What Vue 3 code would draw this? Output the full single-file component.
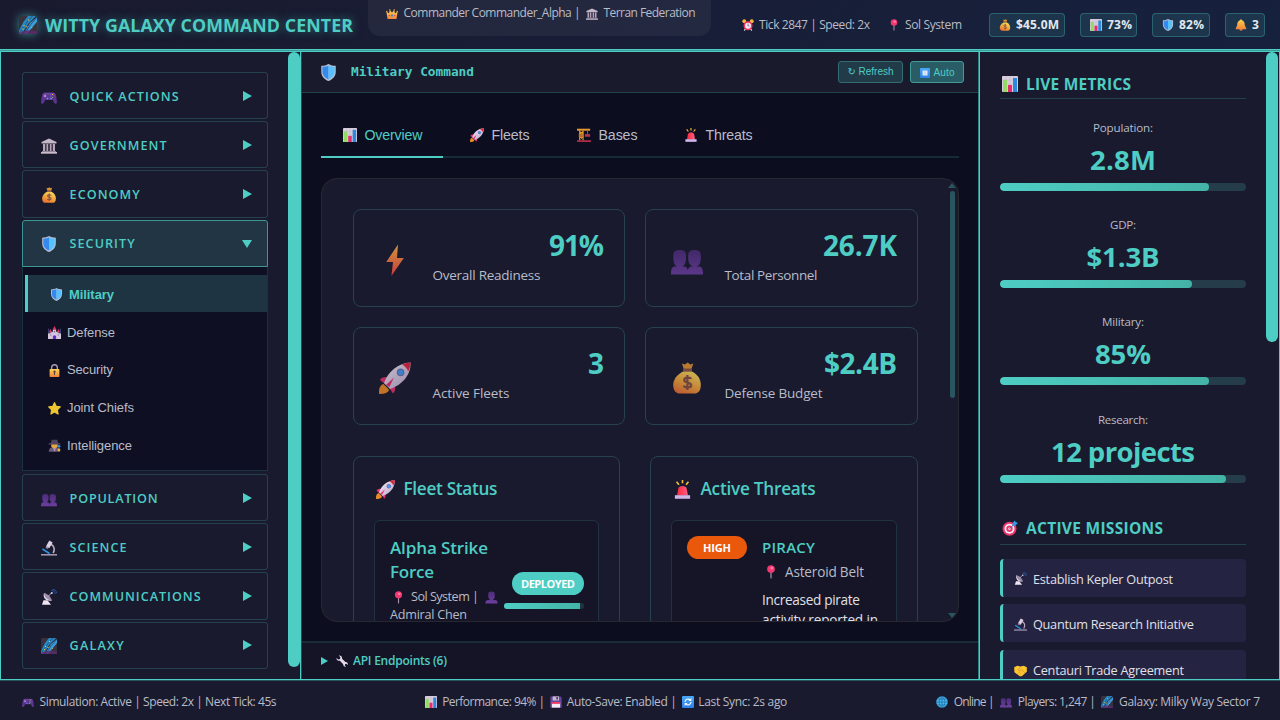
<script setup>
import { h } from 'vue'

const Icon = (props) =>
  h('svg', { class: 'icon', width: props.s, height: props.s, viewBox: '0 0 16 16' }, [
    h('use', { href: '#i-' + props.n })
  ])
Icon.props = ['n', 's']

// Spreads the letters so that a label occupies the given width.
const vFit = {
  mounted(el, binding) {
    const natural = el.getBoundingClientRect().width
    const gaps = el.textContent.length - 1
    if (gaps < 1) return
    const ls = (binding.value - natural) / gaps
    el.style.letterSpacing = ls + 'px'
    el.style.marginRight = -ls + 'px'
  }
}

const chips = [
  { icon: 'money', text: '$45.0M', w: 43, box: 76 },
  { icon: 'chart', text: '73%', w: 25, box: 57 },
  { icon: 'shield', text: '82%', w: 25, box: 58 },
  { icon: 'bell', text: '3', w: 7, box: 40 }
]
const menuTop = [
  { icon: 'gamepad', text: 'QUICK ACTIONS', w: 109 },
  { icon: 'bank', text: 'GOVERNMENT', w: 97 },
  { icon: 'money', text: 'ECONOMY', w: 70 },
  { icon: 'shield', text: 'SECURITY', w: 65, open: true }
]
const menuBottom = [
  { icon: 'people', text: 'POPULATION', w: 88 },
  { icon: 'microscope', text: 'SCIENCE', w: 57 },
  { icon: 'dish', text: 'COMMUNICATIONS', w: 131 },
  { icon: 'galaxy', text: 'GALAXY', w: 54 }
]
const subItems = [
  { icon: 'shield', text: 'Military', w: 45, active: true },
  { icon: 'castle', text: 'Defense', w: 48 },
  { icon: 'lock', text: 'Security', w: 46 },
  { icon: 'star', text: 'Joint Chiefs', w: 67 },
  { icon: 'detective', text: 'Intelligence', w: 65 }
]
const tabs = [
  { icon: 'chart', text: 'Overview', w: 58, box: 122, active: true },
  { icon: 'rocket', text: 'Fleets', w: 38, box: 107 },
  { icon: 'crane', text: 'Bases', w: 39, box: 107 },
  { icon: 'siren', text: 'Threats', w: 47, box: 112 }
]
const stats = [
  { icon: 'bolt', value: '91%', vw: 55, label: 'Overall Readiness', lw: 108 },
  { icon: 'people', value: '26.7K', vw: 74, label: 'Total Personnel', lw: 93 },
  { icon: 'rocket', value: '3', vw: 14, label: 'Active Fleets', lw: 77 },
  { icon: 'money', value: '$2.4B', vw: 73, label: 'Defense Budget', lw: 98 }
]
const metrics = [
  { label: 'Population:', lw: 60, value: '2.8M', vw: 66, pct: 85 },
  { label: 'GDP:', lw: 26, value: '$1.3B', vw: 73, pct: 78 },
  { label: 'Military:', lw: 42, value: '85%', vw: 56, pct: 85 },
  { label: 'Research:', lw: 50, value: '12 projects', vw: 144, pct: 92 }
]
const missions = [
  { icon: 'dish', text: 'Establish Kepler Outpost', w: 140 },
  { icon: 'microscope', text: 'Quantum Research Initiative', w: 161 },
  { icon: 'handshake', text: 'Centauri Trade Agreement', w: 151 }
]
</script>

<template>
  <svg class="sprite" width="0" height="0">
    <defs>
      <linearGradient id="g-gold" x1="0" y1="0" x2="0" y2="1"><stop offset="0" stop-color="#ffd44f" /><stop offset="1" stop-color="#f0843c" /></linearGradient>
      <linearGradient id="g-bag" x1=".8" y1="0" x2=".3" y2="1"><stop offset="0" stop-color="#f8e060" /><stop offset=".6" stop-color="#f0a038" /><stop offset="1" stop-color="#e87034" /></linearGradient>
      <linearGradient id="g-bolt" x1="0" y1="0" x2="0" y2="1"><stop offset="0" stop-color="#ffb545" /><stop offset="1" stop-color="#f2443f" /></linearGradient>
      <linearGradient id="g-purple" x1="0" y1="0" x2="0" y2="1"><stop offset="0" stop-color="#4b2d78" /><stop offset="1" stop-color="#6c3fa0" /></linearGradient>
      <linearGradient id="g-red" x1="0" y1="0" x2="1" y2="0"><stop offset="0" stop-color="#ff2a3c" /><stop offset="1" stop-color="#ff5f84" /></linearGradient>
      <linearGradient id="g-hull" x1="0" y1="0" x2="1" y2="1"><stop offset="0" stop-color="#f4ecf8" /><stop offset="1" stop-color="#b9a5c9" /></linearGradient>
      <linearGradient id="g-blue" x1="0" y1="0" x2="0" y2="1"><stop offset="0" stop-color="#49a9f8" /><stop offset="1" stop-color="#2f7fe8" /></linearGradient>
    </defs>
    <symbol id="i-galaxy" viewBox="0 0 16 16">
      <rect width="16" height="16" rx="1.500" fill="#37323d" />
      <path d="M0 13 4 5 8 0h7L8 7 2.500 16H0z" fill="#2789c4" /><path d="M16 1v4L7 16H4L10 6z" fill="#3a9edb" />
      <path d="M1 14 9 3 12 0M5 16 10 8l6-7" fill="none" stroke="#234c78" stroke-width=".8" />
      <path d="M0 14.500q8-3 16-.8V16H0z" fill="#5b2a6b" opacity=".8" />
      <path d="M4 8h1v1H4zM6.500 9h1v1h-1zM3 11h1v1H3zM8 3h1v1H8zM11 10h.8v.8H11z" fill="#e5d255" />
    </symbol>
    <symbol id="i-crown" viewBox="0 0 16 16">
      <path d="M.5 4.500 4 7l1.200-4L8 6l2.800-3L12 7l3.500-2.500L14 14.500H2z" fill="url(#g-gold)" />
      <g fill="#f5a544"><circle cx="1" cy="4.500" r="1" /><circle cx="5" cy="2.600" r="1.100" /><circle cx="11" cy="2.600" r="1.100" /><circle cx="15" cy="4.500" r="1" /></g>
      <circle cx="8" cy="10" r="1.500" fill="#2f83e8" /><circle cx="4.300" cy="10" r=".9" fill="#e8365f" /><circle cx="11.700" cy="10" r=".9" fill="#e8365f" />
    </symbol>
    <symbol id="i-bank" viewBox="0 0 16 16">
      <path d="M8 .5 15.500 4v1.500H.5V4z" fill="#c3b6c6" /><path d="M2 6h2v7H2zM5.300 6h2v7h-2zM8.700 6h2v7h-2zM12 6h2v7h-2z" fill="#b3a6b8" />
      <path d="M4 6h1.300v7H4zM7.300 6h1.400v7H7.300zM10.700 6H12v7h-1.300z" fill="#483c55" /><path d="M1 13h14v1H1z" fill="#94869a" /><path d="M0 14h16v1.700H0z" fill="#c9bccb" />
    </symbol>
    <symbol id="i-alarm" viewBox="0 0 16 16">
      <circle cx="3" cy="3" r="2.600" fill="#f5b63d" /><circle cx="13" cy="3" r="2.600" fill="#f5b63d" />
      <path d="M3 15.500l2-3M13 15.500l-2-3" stroke="#d9cadf" stroke-width="1.600" />
      <circle cx="8" cy="9" r="6" fill="#f6325f" /><circle cx="8" cy="9" r="4" fill="#f4eef6" /><path d="M8 6v3.300h2" fill="none" stroke="#6d4b80" stroke-width="1" />
    </symbol>
    <symbol id="i-pin" viewBox="0 0 16 16">
      <path d="M7.300 8h1.400v6.500l-.7 1.500-.7-1.500z" fill="#a393ad" /><circle cx="8" cy="4.700" r="4.400" fill="#f33872" /><circle cx="9" cy="3.500" r="1.500" fill="#ff87a5" />
    </symbol>
    <symbol id="i-money" viewBox="0 0 16 16">
      <path d="M5.500.8 7 1.300 8.300.3 9.700 1.300l1.500-.5L10 4H6.500z" fill="#e0922f" /><rect x="6" y="3.300" width="4.500" height="1.400" rx=".6" fill="#8f5447" />
      <path d="M6 4.700h4.500c3 1.600 4.400 4 4.400 6.700 0 3-1.300 4.400-3.300 4.400H4.500c-2 0-3.400-1.400-3.400-4.400C1.100 8.700 3 6.300 6 4.700z" fill="url(#g-bag)" />
      <path d="M10 8.500c-.3-.9-3.400-1.100-3.400.5 0 1.700 3.500.9 3.500 2.600 0 1.500-3.300 1.400-3.700.2M8.200 6.500V14" fill="none" stroke="#865044" stroke-width="1.100" />
    </symbol>
    <symbol id="i-chart" viewBox="0 0 16 16">
      <rect width="16" height="16" rx="1" fill="#d9cede" /><path d="M0 4h16M0 8h16M4 0v16M8 0v16M12 0v16" stroke="#b9adc2" stroke-width=".4" />
      <path d="M1 4h4v12H1z" fill="#93dc63" /><path d="M6 9h4v7H6z" fill="#e52c6c" /><path d="M11 2h4v14h-4z" fill="#2e88dd" />
    </symbol>
    <symbol id="i-shield" viewBox="0 0 16 16">
      <path d="M8 0C10 1.300 12.300 1.600 14.800 1.700v5.500c0 4.300-2.800 7.200-6.800 8.800-4-1.600-6.800-4.500-6.800-8.800V1.700C3.700 1.600 6 1.300 8 0z" fill="#b8bfd5" />
      <path d="M8 1.300v13.300c-3.400-1.500-5.700-3.800-5.700-7.200V2.700C4.300 2.600 6.400 2.300 8 1.300z" fill="#3588ed" /><path d="M8 1.300v13.300c3.400-1.500 5.700-3.800 5.700-7.200V2.700c-2-.1-4.100-.4-5.700-1.400z" fill="#55c2ff" />
    </symbol>
    <symbol id="i-bell" viewBox="0 0 16 16">
      <circle cx="8" cy="13.500" r="2" fill="#dc743d" /><path d="M8 .5c1 0 1.400.5 1.500 1.300C12 2.700 13 5 13 8l2 4.500v1H1v-1L3 8c0-3 1-5.300 3.500-6.200C6.600 1 7 .5 8 .5z" fill="url(#g-gold)" />
    </symbol>
    <symbol id="i-gamepad" viewBox="0 0 16 16">
      <path d="M4 3.500h8c2 0 2.600 1 3.200 4l.7 5c.3 3-2 3-3.200.5L12 11H4l-.7 2C2 15.500-.2 15.500.1 12.500l.7-5c.6-3 1.200-4 3.200-4z" fill="#5d348f" />
      <path d="M3 4.500h10l1 1H2z" fill="#7c50b4" /><circle cx="4" cy="7" r="1.300" fill="#a88bd0" /><circle cx="6.500" cy="9.500" r="1" fill="#6e86dc" /><circle cx="10" cy="9.500" r="1" fill="#6e86dc" />
      <path d="M11 5h1v1h-1z" fill="#ead044" /><path d="M12.500 6.500h1v1h-1z" fill="#ef3b5c" /><path d="M11 8h1v1h-1z" fill="#4dbb69" /><path d="M9.500 6.500h1v1h-1z" fill="#4ea3ed" />
    </symbol>
    <symbol id="i-person" viewBox="0 0 16 16"><path d="M4 3.500C4 1.500 5.500.5 8 .5s4 1 4 3v3c0 2-.8 3.200-2 3.900v.6h2c2.500 0 3.500 1 3.500 4.500H.5C.5 12 1.500 11 4 11h2v-.6C4.800 9.700 4 8.500 4 6.500z" fill="url(#g-purple)" /></symbol>
    <symbol id="i-people" viewBox="0 0 16 16">
      <path d="M1.200 5.500C1.200 3.800 2.200 3 4.300 3s3.200.8 3.200 2.500v2C7.500 9.500 6.500 11 5.500 11.300h1C8 11.300 8.600 12.500 8.600 15.200H0C0 12.500.5 11.300 2 11.300h1C2 10.800 1.200 9.500 1.200 7.500z" fill="url(#g-purple)" />
      <path d="M8.600 5.500C8.600 3.800 9.700 3 11.800 3s3.100.8 3.100 2.500v2c0 2-.9 3.300-2 3.800h1c1.600 0 2.100 1.200 2.100 3.900H8.200c0-2.700.7-3.900 2.200-3.900h.6c-1.300-.5-2.400-1.800-2.400-3.800z" fill="url(#g-purple)" />
    </symbol>
    <symbol id="i-microscope" viewBox="0 0 16 16">
      <path d="M8.500 4.500C13 4 14.500 10 12 13" fill="none" stroke="#b8abc4" stroke-width="1.500" /><path d="m8.300.5 3.400 2-3.500 5.800-3.300-1.900z" fill="#dcd0e2" />
      <path d="m5.500 6 2.300 1.400L6.500 9 4.500 7.800z" fill="#9c8fa8" /><path d="m1.500 9 7 4.500" stroke="#2d93e0" stroke-width="1.600" /><path d="M0 14h16v1.600H0z" fill="#9f93ab" />
    </symbol>
    <symbol id="i-dish" viewBox="0 0 16 16">
      <path d="m1 15.800 1.500-4.500h4L10 15.800z" fill="#eee5f0" /><path d="M3 4c-1.500 4 1.500 9 8 7.500z" fill="#ddd0e1" /><path d="M3 4c3.500.5 7 4 8 7.500-4-.3-8-3.500-8-7.500z" fill="#9889a7" />
      <path d="m6.500 8 4-4" stroke="#b7abc0" stroke-width="1" /><circle cx="10.800" cy="4" r="1" fill="#d9cfdf" /><path d="M10.500 1.500c2.500 0 3.600 1.400 3.600 3.500M11.500.3c3 .1 4 2 4 3.800" fill="none" stroke="#28559f" stroke-width="1" />
    </symbol>
    <symbol id="i-castle" viewBox="0 0 16 16">
      <path d="M0 9h3V7h3V4h4v3h3v2h3v7H0z" fill="#d6c6db" /><path d="m8 0 2.300 4.500H5.700zM3 3.500 5 8H1zM13 3.500 15 8h-4z" fill="#e13565" /><path d="M.3 3h1v6h-1zM14.700 3h1v6h-1z" fill="#36518c" />
      <path d="M6 16v-3.500q2-2.500 4 0V16z" fill="#5a2fd0" /><path d="M7.200 6h1.600v2H7.200zM3 10h1v2H3zM12 10h1v2h-1z" fill="#78699a" />
    </symbol>
    <symbol id="i-lock" viewBox="0 0 16 16"><path d="M4.500 7V4.500a3.500 3.500 0 0 1 7 0V7" fill="none" stroke="#a99bb0" stroke-width="1.700" /><rect x="2" y="6" width="12" height="10" rx="1" fill="url(#g-gold)" /><path d="M7.300 9.500h1.400v4H7.300z" fill="#59404a" /><circle cx="8" cy="9.500" r="1.400" fill="#59404a" /></symbol>
    <symbol id="i-star" viewBox="0 0 16 16"><path d="m8 .8 2.100 4.500 5 .7-3.600 3.600.9 5.200L8 12.400l-4.400 2.400.9-5.200L.9 6l5-.7z" fill="#edc52f" stroke="#edc52f" stroke-width="1.500" stroke-linejoin="round" /></symbol>
    <symbol id="i-detective" viewBox="0 0 16 16">
      <path d="M1 15.700Q1 10 6 10h4q5 0 5 5.700z" fill="#655c79" /><path d="M4 5h8v4l-2 2.500H6L4 9z" fill="#e9a640" /><path d="M4.500 1h7l.8 3.500 3 1v1.200H.7V5.500l3-1z" fill="#4f455f" /><path d="m6 10 2 1.500L10 10 8.700 15H7.500z" fill="#b78cb9" />
      <circle cx="13.500" cy="9" r="1.700" fill="#2697e6" /><circle cx="13.500" cy="13.500" r="1.700" fill="#f4b33d" />
    </symbol>
    <symbol id="i-rocket" viewBox="0 0 16 16">
      <path d="M2.200 11c-2 .5-2.400 3.500-2.100 5 1.700 0 4.500-.2 4.900-2.100z" fill="#ed8a27" /><path d="M.5 9c.3-1.300 2-1.700 5-1.500L3.500 11.500zM8 10.500c.2 2.500.2 4.300-1 5.300L4.500 12z" fill="#e92f6b" />
      <path d="M2.500 10.500C4.500 5 9 .5 15.800.2 16 7 11 11.500 5.500 13.500z" fill="url(#g-hull)" /><path d="M11.500 1.300C13 .6 14.500.2 15.800.2c0 1.300-.4 2.900-1.200 4.400C14 3.300 12.700 1.800 11.500 1.300z" fill="#e0243e" />
      <path d="m3.500 11.500 4-3.700-2.300 4.700z" fill="#e92f6b" /><circle cx="10.800" cy="5.200" r="1.900" fill="#6c70a9" /><circle cx="10.800" cy="5.200" r="1.300" fill="#459af0" />
    </symbol>
    <symbol id="i-crane" viewBox="0 0 16 16">
      <path d="M3 2.500v11.500M7 2.500v11.500M3 4l4 3-4 3 4 3M7 4 3 7l4 3-4 3" fill="none" stroke="#e79a2b" stroke-width="1.200" /><path d="M0 .8h15v2.300H0z" fill="#e69735" /><path d="M2 7h5.500v3H2z" fill="#b7742e" />
      <path d="M12 3v4" stroke="#766a86" stroke-width="1" /><path d="M9 7h6v3H9z" fill="#b7354d" /><path d="M0 14.200h16v1.500H0z" fill="#e63956" />
    </symbol>
    <symbol id="i-siren" viewBox="0 0 16 16">
      <path d="M8 0v2.800M3 1.500 5 4M13 1.500 11 4" stroke="#f5c03c" stroke-width="1.300" /><path d="m3.400 13 1-5.500C4.800 5.700 6 5 8 5s3.200.7 3.600 2.500l1 5.500z" fill="url(#g-red)" /><path d="M1.600 12.800h12.800v3H1.600z" fill="#cfb7e8" />
    </symbol>
    <symbol id="i-bolt" viewBox="0 0 16 16"><path d="M9.500.2 3.600 9H7L6.200 16l6.200-9H9z" fill="url(#g-bolt)" /></symbol>
    <symbol id="i-pause" viewBox="0 0 16 16"><rect width="16" height="16" rx="1.500" fill="url(#g-blue)" /><path d="M4 4h8v8H4z" fill="#e2eafa" /><path d="M7.500 4h1v8h-1z" fill="#9cc6f6" /></symbol>
    <symbol id="i-target" viewBox="0 0 16 16">
      <circle cx="7.500" cy="8.800" r="7" fill="#e9366c" /><circle cx="7.500" cy="8.800" r="5" fill="#f5eef6" /><circle cx="7.500" cy="8.800" r="3.200" fill="#e9366c" /><circle cx="7.500" cy="8.800" r="1.200" fill="#f5eef6" /><path d="m7.500 8.800 5-5" stroke="#695887" /><path d="M10.500 3.500 12.500.5l1.200 1.600L16 3l-3 2.700-2.500.5z" fill="#319be9" />
    </symbol>
    <symbol id="i-handshake" viewBox="0 0 16 16">
      <path d="M.2 4 4 2l4 1.200L12 2l3.800 2v5.500L9.500 15H7L.5 10z" fill="#fbc630" /><path d="m8 4-3 3.500 1.500 1L9 7l4.500 4M5 11.500l2-2M7 13l2-2" fill="none" stroke="#dc8e25" stroke-width=".9" />
    </symbol>
    <symbol id="i-wrench" viewBox="0 0 16 16"><path d="M3.700.6c2.800-.4 4.900 1.500 4.400 4.300l4.500 4.500c2-.3 3.700 1.500 3.100 3.800l-1.900-1.500-1.700.6-.2 1.800 1.500 1.400c-2.300.6-4.200-1.200-3.800-3.300L5.100 7.700C2.500 8.300.5 6.400.5 3.900L3 6l2.300-.7.5-2.400z" fill="#e3d7e8" /></symbol>
    <symbol id="i-floppy" viewBox="0 0 16 16"><path d="M.5 1q0-.5.5-.5h13L15.500 2v13.500H.5z" fill="#63459d" /><path d="M3.500.5h8.500v5.500H3.500z" fill="#c7bad0" /><path d="M8.500 1.300h2v3.500h-2z" fill="#3f2b62" /><path d="M2.500 8h11v7.500h-11z" fill="#f4eaf4" /><path d="M2.500 8h11v2.500h-11z" fill="#ee3c64" /></symbol>
    <symbol id="i-sync" viewBox="0 0 16 16"><rect width="16" height="16" rx="1.500" fill="url(#g-blue)" /><path d="M4 8a4 4 0 0 1 7-2.500M12 8a4 4 0 0 1-7 2.500" fill="none" stroke="#f7f7ff" stroke-width="1.600" /><path d="M12.500 2.800v4h-4zM3.500 13.200v-4h4z" fill="#f7f7ff" /></symbol>
    <symbol id="i-globe" viewBox="0 0 16 16"><circle cx="8" cy="8" r="7.700" fill="#45b7ef" /><path d="M8 .3v15.400M.3 8h15.400M1.500 4h13M1.500 12h13M8 .3C3 4 3 12 8 15.700M8 .3c5 3.700 5 11.700 0 15.400" fill="none" stroke="#1c5e94" stroke-width=".8" /></symbol>
  </svg>

  <div class="app">
    <header class="top">
      <div class="brand"><Icon n="galaxy" s="18" /><span v-fit="308">WITTY GALAXY COMMAND CENTER</span></div>
      <div class="commander">
        <Icon n="crown" s="12" /><span v-fit="177">Commander Commander_Alpha |</span>
        <Icon n="bank" s="12" /><span v-fit="92">Terran Federation</span>
      </div>
      <div class="where">
        <Icon n="alarm" s="12" /><span v-fit="111">Tick 2847 | Speed: 2x</span>
        <Icon class="gap" n="pin" s="12" /><span v-fit="57">Sol System</span>
      </div>
      <div class="chips">
        <div v-for="c in chips" :key="c.text" class="chip" :style="{ width: c.box + 'px' }"><Icon :n="c.icon" s="12" /><span v-fit="c.w">{{ c.text }}</span></div>
      </div>
    </header>

    <main class="main">
      <nav class="side">
        <div class="menu">
          <div v-for="m in menuTop" :key="m.text" class="cat" :class="{ open: m.open }">
            <Icon :n="m.icon" s="16" /><span v-fit="m.w">{{ m.text }}</span><i class="arrow"></i>
          </div>
          <div class="sub">
            <div v-for="s in subItems" :key="s.text" class="subitem" :class="{ active: s.active }"><Icon :n="s.icon" s="13" /><span v-fit="s.w">{{ s.text }}</span></div>
          </div>
          <div v-for="m in menuBottom" :key="m.text" class="cat">
            <Icon :n="m.icon" s="16" /><span v-fit="m.w">{{ m.text }}</span><i class="arrow"></i>
          </div>
        </div>
        <div class="thumb left"></div>
      </nav>

      <section class="center">
        <div class="bar">
          <Icon n="shield" s="17" /><b v-fit="123">Military Command</b>
          <div class="btn refresh"><span v-fit="46">↻ Refresh</span></div>
          <div class="btn auto"><Icon n="pause" s="10" /><span v-fit="21">Auto</span></div>
        </div>
        <div class="tabs">
          <div v-for="t in tabs" :key="t.text" class="tab" :class="{ active: t.active }" :style="{ width: t.box + 'px' }"><Icon :n="t.icon" s="14" /><span v-fit="t.w">{{ t.text }}</span></div>
        </div>
        <div class="panel">
          <div class="scroll">
            <div class="stats">
              <div v-for="s in stats" :key="s.label" class="stat">
                <Icon :n="s.icon" s="32" />
                <div class="statbody"><div class="value"><span v-fit="s.vw">{{ s.value }}</span></div><div class="label"><span v-fit="s.lw">{{ s.label }}</span></div></div>
              </div>
            </div>
            <div class="groups">
              <div class="group">
                <h3><Icon n="rocket" s="19" /><span v-fit="94">Fleet Status</span></h3>
                <div class="entry">
                  <div class="fleet">
                    <div class="fname"><span v-fit="98">Alpha Strike</span><br /><span v-fit="44">Force</span></div>
                    <div class="floc"><Icon n="pin" s="13" /><span v-fit="68">Sol System |</span><Icon n="person" s="13" /></div>
                    <div class="floc2"><span v-fit="77">Admiral Chen</span></div>
                  </div>
                  <div class="fstate"><div class="badge deployed"><span v-fit="54">DEPLOYED</span></div><div class="mini"><div></div></div></div>
                </div>
              </div>
              <div class="group">
                <h3><Icon n="siren" s="19" /><span v-fit="115">Active Threats</span></h3>
                <div class="entry threat">
                  <div class="badge high"><span v-fit="28">HIGH</span></div>
                  <div class="tinfo">
                    <div class="tname"><span v-fit="53">PIRACY</span></div>
                    <div class="tloc"><Icon n="pin" s="14" /><span v-fit="79">Asteroid Belt</span></div>
                    <div class="tdesc"><span v-fit="98">Increased pirate</span><br /><span v-fit="116">activity reported in</span></div>
                  </div>
                </div>
              </div>
            </div>
          </div>
          <div class="inner-thumb"></div><i class="tri up"></i><i class="tri down"></i>
        </div>
        <div class="api"><i class="arrow"></i><Icon n="wrench" s="12" /><span v-fit="94">API Endpoints (6)</span></div>
      </section>

      <aside class="right">
        <h2><Icon n="chart" s="16" /><span v-fit="105">LIVE METRICS</span></h2>
        <div v-for="m in metrics" :key="m.label" class="metric">
          <div class="mlabel"><span v-fit="m.lw">{{ m.label }}</span></div>
          <div class="mvalue"><span v-fit="m.vw">{{ m.value }}</span></div>
          <div class="track"><div :style="{ width: m.pct + '%' }"></div></div>
        </div>
        <h2 class="second"><Icon n="target" s="16" /><span v-fit="137">ACTIVE MISSIONS</span></h2>
        <div v-for="m in missions" :key="m.text" class="mission"><Icon :n="m.icon" s="13" /><span v-fit="m.w">{{ m.text }}</span></div>
        <div class="thumb rightbar"></div>
      </aside>
    </main>

    <footer class="foot">
      <div><Icon n="gamepad" s="12" /><span v-fit="237">Simulation: Active | Speed: 2x | Next Tick: 45s</span></div>
      <div class="mid"><Icon n="chart" s="12" /><span v-fit="103">Performance: 94% |</span><Icon n="floppy" s="12" /><span v-fit="110">Auto-Save: Enabled |</span><Icon n="sync" s="12" /><span v-fit="89">Last Sync: 2s ago</span></div>
      <div><Icon n="globe" s="12" /><span v-fit="41">Online |</span><Icon n="people" s="12" /><span v-fit="78">Players: 1,247 |</span><Icon n="galaxy" s="12" /><span v-fit="141">Galaxy: Milky Way Sector 7</span></div>
    </footer>
  </div>
</template>

<style>
body { background: #0d0d20; overflow: hidden; }
</style>

<style scoped>
* { box-sizing: border-box; }
.sprite { position: absolute; }
.icon { flex: none; display: block; }
.app { width: 1280px; height: 720px; overflow: hidden; display: flex; flex-direction: column; color: #e0e0e8; font: 12px/16px "Open Sans", "Noto Sans", sans-serif; white-space: nowrap; }
.app span { display: inline-block; flex: none; }
.top { height: 50px; flex: none; display: flex; align-items: center; padding-left: 19px; background: linear-gradient(135deg, #1a1a2e, #16213e); border-bottom: 1px solid #4ecdc4; box-shadow: 0 1px #3a9b99; color: #b8bcc8; position: relative; }
.brand { display: flex; align-items: center; gap: 8px; width: 349px; color: #4ecdc4; font-size: 17.800px; font-weight: 700; line-height: 24px; text-shadow: 0 0 10px rgba(78, 205, 196, .5); }
.brand .icon { filter: drop-shadow(0 0 5px rgba(78, 205, 196, .6)); }
.commander { width: 343px; height: 36px; align-self: flex-start; padding: 5px 0 0 18px; display: flex; align-items: flex-start; gap: 5.500px; border-radius: 0 0 12px 12px; background: rgba(255, 255, 255, .05); }
.commander .icon { margin-top: 3px; }
.where { margin-left: 30.500px; display: flex; align-items: center; gap: 5.500px; }
.where .gap { margin-left: 12px; }
.chips { margin-left: auto; margin-right: 15px; display: flex; gap: 15px; }
.chip { height: 24px; display: flex; align-items: center; gap: 5.500px; padding-left: 8.500px; border: 1px solid rgba(78, 205, 196, .3); border-radius: 4px; background: rgba(78, 205, 196, .12); color: #e4e8ee; font-weight: 700; font-size: 12px; }
.main { height: 629px; margin-top: 1px; flex: none; display: grid; grid-template-columns: 300px 680px 299px; border: solid #4ecdc4; border-width: 1px 1px 1px 0; background: #4ecdc4; }
.side { position: relative; background: #1a1a2e; padding: 20px 0 0 21px; border-left: 1px solid #4ecdc4; }
.menu { width: 246px; color: #4ecdc4; }
.cat { height: 47.200px; margin-bottom: 2px; border: 1px solid rgba(78, 205, 196, .22); border-radius: 3px; display: flex; align-items: center; padding: 2px 15px 0 18px; font-size: 12.600px; font-weight: 600; }
.cat .icon { margin-right: 12.600px; }
.cat.open { background: #223544; border-color: #3c9692; margin-bottom: 0; border-radius: 3px 3px 0 0; }
.arrow { width: 0; height: 0; border: solid transparent; border-width: 5px 0 5px 9px; border-left-color: #4ecdc4; }
.cat .arrow { margin-left: auto; margin-top: -2px; }
.cat.open .arrow { border-width: 8px 5px 0; border-color: #4ecdc4 transparent transparent; margin-top: 0; }
.sub { height: 204.200px; margin-bottom: 3px; padding: 8px 0 0 2px; background: #0f0f23; border: 1px solid rgba(78, 205, 196, .18); border-top: 0; color: #b8bcc8; font-family: "Liberation Sans", Arial, sans-serif; font-size: 13px; }
.subitem { height: 37.700px; padding: 3px 0 0 23px; display: flex; align-items: center; gap: 6px; }
.subitem.active { padding-left: 22px; padding-top: 2px; border-left: 3px solid #4ecdc4; background: #1e3442; color: #4ecdc4; font-weight: 700; }
.thumb { position: absolute; width: 12px; background: #4ecdc4; border-radius: 6px; top: 0; }
.thumb.left { left: 287px; height: 615px; }
.center { margin-left: 1px; background: #0d0d20; border-left: 1px solid #245057; border-right: 1px solid #2d8486; min-width: 0; display: flex; flex-direction: column; width: 678px; }
.bar { height: 41px; flex: none; display: flex; align-items: center; padding: 0 14px 0 18px; background: #191a2b; border-bottom: 1px solid #21424c; color: #4ecdc4; }
.bar b { margin-left: 14px; font: 700 12.800px/16px "DejaVu Sans Mono", monospace; }
.btn { height: 22px; border: 1px solid #306c70; border-radius: 3px; background: #223b49; display: flex; align-items: center; justify-content: center; font: 10px/14px "Liberation Sans", "DejaVu Sans", sans-serif; gap: 4px; }
.refresh { width: 65px; margin-left: auto; padding-bottom: 1px; }
.auto { width: 54px; margin-left: 7px; padding-top: 1px; background: #2a5c66; border-color: #409c99; }
.tabs { flex: none; height: 45px; margin: 20px 19px 0; border-bottom: 2px solid #172a37; display: flex; font: 14.200px/20px "Liberation Sans", Arial, sans-serif; color: #b8bcc8; }
.tab { height: 45px; padding: 0 0 2px 22px; display: flex; align-items: center; gap: 7.500px; }
.tab.active { margin-right: 5px; color: #4ecdc4; border-bottom: 2px solid #4ecdc4; padding-bottom: 0; }
.panel { position: relative; flex: none; height: 444px; margin: 20px 19px 0; border: 1px solid #27282f; border-radius: 16px; background: #1a1a2e; overflow: hidden; }
.scroll { padding: 29.500px 40px 0 31px; }
.stats { display: grid; grid-template-columns: 272px 273px; gap: 20px; }
.stat { height: 98px; padding: 4px 20px 0 25px; border: 1px solid #27424e; border-radius: 8px; display: flex; align-items: center; }
.stat .icon { opacity: .8; }
.statbody { margin-left: 21.500px; flex: 1; }
.value { height: 38px; line-height: 34px; text-align: right; color: #4ecdc4; font-size: 28px; font-weight: 700; margin-top: -8px; }
.label { color: #b8bcc8; font-size: 13.500px; line-height: 18px; }
.groups { display: grid; grid-template-columns: 267px 268px; gap: 30px; margin-top: 31px; }
.group { height: 230px; padding: 19px 20px 0; border: 1px solid #27424e; border-radius: 8px; }
h3 { margin: 0; height: 27px; display: flex; align-items: center; gap: 8.500px; padding-left: 2px; color: #4ecdc4; font-size: 17.200px; font-weight: 600; }
.entry { height: 160px; margin-top: 17px; padding: 15px 15px 0; display: flex; justify-content: space-between; background: #151527; border: 1px solid #20323f; border-radius: 6px; }
.fname { color: #4ecdc4; font-size: 17px; line-height: 24px; font-weight: 600; height: 53px; }
.floc { display: flex; align-items: center; gap: 6px; padding-left: 2px; color: #b8bcc8; font-size: 12.600px; height: 17px; }
.floc2 { color: #b8bcc8; font-size: 12.600px; padding-top: 1px; }
.fleet { width: 110px; }
.fstate { width: 80px; padding-top: 36px; }
.badge { display: flex; align-items: center; justify-content: center; height: 23px; border-radius: 12px; color: #fff; font-size: 11px; font-weight: 700; padding-top: 1px; }
.deployed { width: 72px; margin-left: 9px; background: #4ecdc4; }
.mini { height: 6px; margin: 8px -1px 0 1px; border-radius: 3px; background: #20343f; overflow: hidden; }
.mini div { width: 95%; height: 6px; background: linear-gradient(90deg, #4ecdc4, #44b3a7); }
.high { width: 60px; background: #ea580c; }
.threat { justify-content: flex-start; }
.tinfo { margin-left: 15px; color: #e0e0e8; font-size: 13.600px; }
.tname { color: #4ecdc4; font-size: 15px; font-weight: 600; line-height: 22px; }
.tloc { display: flex; align-items: center; gap: 7px; padding-left: 2px; color: #b8bcc8; height: 28px; }
.tdesc { line-height: 20px; margin-top: 4px; }
.inner-thumb { position: absolute; right: 3px; top: 12px; width: 5px; height: 207px; border-radius: 3px; background: #2a555f; }
.tri { position: absolute; right: 2px; border: 4px solid transparent; }
.tri.up { top: 0; border-bottom: 5px solid #2a555f; }
.tri.down { bottom: -1px; border-top: 5px solid #2a555f; }
.api { flex: 1; margin-top: 19px; border-top: 2px solid #1a2c39; background: #141426; display: flex; align-items: center; padding-left: 19px; color: #4ecdc4; font-weight: 600; font-size: 12px; }
.api .arrow { border-width: 4px 0 4px 7px; margin-right: 8px; }
.api span { margin-left: 5px; }
.right { position: relative; background: #1a1a2e; padding: 20px 33px 0 20px; overflow: hidden; }
h2 { margin: 0 0 20px; height: 27px; padding: 0 0 2px 2px; border-bottom: 1px solid #22414b; display: flex; align-items: center; gap: 8px; color: #4ecdc4; font-size: 15.500px; line-height: 20px; }
.metric { height: 97.200px; text-align: center; }
.mlabel { color: #b8bcc8; font-size: 11.600px; line-height: 18px; }
.mvalue { height: 46px; line-height: 45px; color: #4ecdc4; font-size: 27.500px; font-weight: 700; }
.track { height: 8px; border-radius: 4px; background: #253c4a; overflow: hidden; }
.track div { height: 8px; border-radius: 4px; background: linear-gradient(90deg, #4ecdc4, #44b3a7); }
h2.second { margin: 9px 0 14px; height: 28px; padding-bottom: 5px; }
.mission { height: 38px; margin-bottom: 7.700px; padding: 2px 0 0 11px; border-left: 3px solid #4ecdc4; border-radius: 4px; background: #242442; display: flex; align-items: center; gap: 6px; font-size: 12.700px; color: #e0e0e8; }
.rightbar { right: 1px; height: 290px; }
.foot { flex: 1; display: flex; justify-content: space-between; align-items: center; padding: 3px 20px 0 22px; background: #1a1a2e; border-top: 1px solid #26535c; color: #b8bcc8; }
.foot > div { display: flex; align-items: center; gap: 5.600px; }
.foot > .mid { gap: 4.800px; }
</style>
